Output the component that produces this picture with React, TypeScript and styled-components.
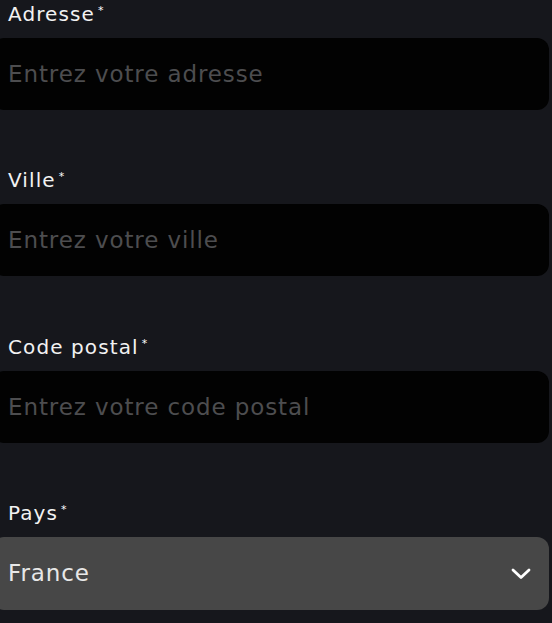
import React from "react";
import styled, { createGlobalStyle } from "styled-components";

const GlobalStyle = createGlobalStyle`
  html, body {
    margin: 0;
    padding: 0;
    background: #16171c;
    overflow: hidden;
  }
  body {
    font-family: "DejaVu Sans", "Noto Sans", sans-serif;
  }
`;

const Form = styled.form`
  display: flex;
  flex-direction: column;
  padding-top: 1px;
  margin: 0 3px 0 -8px;
`;

const Field = styled.div`
  display: flex;
  flex-direction: column;
  margin-bottom: 57.3px;
`;

const Label = styled.label`
  display: flex;
  align-items: flex-start;
  height: 27px;
  margin: 0 0 10px 16px;
  color: #f2f2f2;
  font-size: 20px;
  font-weight: 400;
  line-height: 27px;
  letter-spacing: 1.1px;
`;

const Star = styled.span`
  font-size: 11px;
  line-height: 11px;
  margin: 4px 0 0 3px;
  color: #ffffff;
`;

const TextInput = styled.input`
  box-sizing: border-box;
  width: 100%;
  height: 72px;
  border: none;
  outline: none;
  border-radius: 12px;
  background: #020202;
  padding: 0 16px;
  color: #e6e6e6;
  font-family: inherit;
  font-size: 23px;
  font-weight: 400;
  letter-spacing: 0.9px;

  &::placeholder {
    color: #4d4d4f;
  }
`;

const SelectBox = styled.div`
  box-sizing: border-box;
  display: flex;
  align-items: center;
  justify-content: space-between;
  height: 73px;
  border-radius: 12px;
  background: #474747;
  padding: 0 17px 0 16px;
  color: #e8e8e8;
  font-size: 23px;
  letter-spacing: 0.9px;
`;

const Chevron = () => (
  <svg width="22" height="13" viewBox="0 0 22 13" fill="none">
    <path
      d="M3 3 L11 10.5 L19 3"
      stroke="#ffffff"
      strokeWidth="2.8"
      strokeLinecap="round"
      strokeLinejoin="round"
    />
  </svg>
);

const fields = [
  { label: "Adresse", placeholder: "Entrez votre adresse" },
  { label: "Ville", placeholder: "Entrez votre ville" },
  { label: "Code postal", placeholder: "Entrez votre code postal" },
];

export default function App() {
  return (
    <>
      <GlobalStyle />
      <Form>
        {fields.map((f) => (
          <Field key={f.label}>
            <Label>
              {f.label}
              <Star>*</Star>
            </Label>
            <TextInput placeholder={f.placeholder} />
          </Field>
        ))}
        <Field>
          <Label>
            Pays
            <Star>*</Star>
          </Label>
          <SelectBox>
            <span>France</span>
            <Chevron />
          </SelectBox>
        </Field>
      </Form>
    </>
  );
}
